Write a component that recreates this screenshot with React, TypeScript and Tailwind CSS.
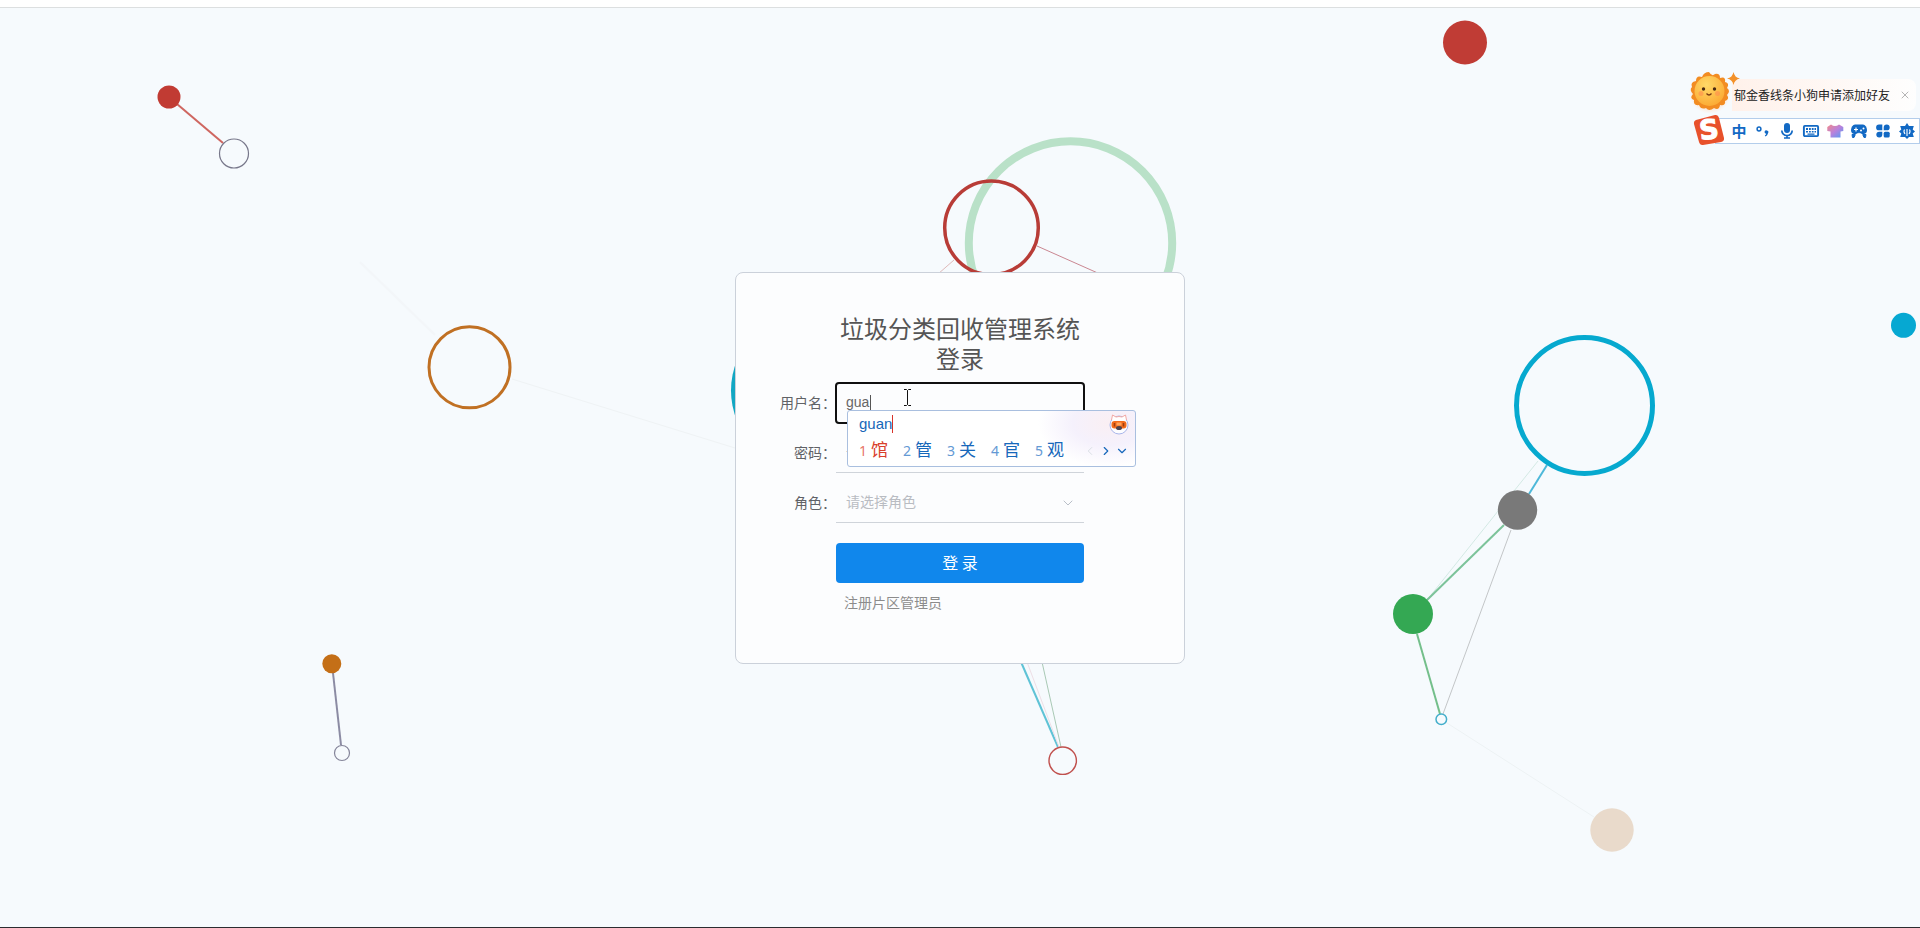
import React, { useState } from 'react';
import { ChevronDown, ChevronLeft, ChevronRight, X } from 'lucide-react';

interface Dot {
  x: number;
  y: number;
  r: number;
  color: string;
  ring?: number;
}

const LINKS = [
  { d: 'M177 104L223 143', color: '#cf6660', width: 2 },
  { d: 'M333 673L341 745', color: '#8b8ba3', width: 2 },
  { d: 'M360 262L435 335', color: '#f3f6f9', width: 2 },
  { d: 'M512 379L735 448', color: '#eff3f5', width: 1 },
  { d: 'M1037 246L1100 274', color: '#c98791', width: 1 },
  { d: 'M954 260L938 274', color: '#dfb9b9', width: 1 },
  { d: 'M1021 662L1058 747', color: '#5fc3d6', width: 2 },
  { d: 'M1027 662L1059 747', color: '#eedfe6', width: 1 },
  { d: 'M1042 662L1061 747', color: '#a9c9b5', width: 1 },
  { d: 'M1538 461L1427 600', color: '#d3e9e4', width: 1 },
  { d: 'M1547 465L1529 494', color: '#4db8d9', width: 2 },
  { d: 'M1504 525L1427 600', color: '#7cc39a', width: 2 },
  { d: 'M1511 530L1443 714', color: '#c3c6c8', width: 1 },
  { d: 'M1417 634L1440 714', color: '#74bf8b', width: 2 },
  { d: 'M1447 723L1594 817', color: '#edf2f4', width: 1 },
];

const DOTS: Dot[] = [
  { x: 169, y: 97, r: 11.5, color: '#c13b33' },
  { x: 234, y: 153.5, r: 14.5, color: '#77778a', ring: 1.2 },
  { x: 469.5, y: 367.3, r: 40.5, color: '#c07023', ring: 3 },
  { x: 331.8, y: 663.8, r: 9.5, color: '#c46f17' },
  { x: 342, y: 753, r: 7.5, color: '#85859a', ring: 1.2 },
  { x: 811, y: 390.5, r: 80, color: '#12a7c3' },
  { x: 1070.5, y: 243, r: 101.7, color: '#b9e1c8', ring: 8 },
  { x: 991.5, y: 227.8, r: 46.8, color: '#b83c37', ring: 3.5 },
  { x: 1465, y: 42.5, r: 22, color: '#c03c35' },
  { x: 1903.5, y: 325.3, r: 12.5, color: '#06a8d2' },
  { x: 1584.5, y: 405.5, r: 68, color: '#06a9cf', ring: 5 },
  { x: 1517.5, y: 510, r: 19.7, color: '#797979' },
  { x: 1413, y: 614, r: 20, color: '#34a853' },
  { x: 1441.3, y: 719.3, r: 5.3, color: '#43aecb', ring: 1.5 },
  { x: 1612, y: 830, r: 21.7, color: '#e9dacb' },
  { x: 1062.7, y: 760.7, r: 13.7, color: '#c0504d', ring: 1.4 },
];

const CANDIDATES = ['馆', '管', '关', '官', '观'];

const Particles: React.FC = () => (
  <svg
    className="pointer-events-none absolute inset-0 h-full w-full"
    viewBox="0 0 1920 928"
    preserveAspectRatio="xMidYMid slice"
    aria-hidden="true"
  >
    {LINKS.map(link => (
      <path key={link.d} d={link.d} stroke={link.color} strokeWidth={link.width} />
    ))}
    {DOTS.map(dot => (
      <circle
        key={`${dot.x}-${dot.y}`}
        cx={dot.x}
        cy={dot.y}
        r={dot.r}
        fill={dot.ring ? 'none' : dot.color}
        stroke={dot.ring ? dot.color : 'none'}
        strokeWidth={dot.ring ?? 0}
      />
    ))}
  </svg>
);

const Mascot: React.FC = () => (
  <svg width="20" height="22" viewBox="0 0 20 22" aria-hidden="true">
    <circle cx="10" cy="12" r="9" fill="#fdfdff" stroke="#a9b6ea" />
    <path d="M2.500 7L3.500 2L7 4Q10 3 13 4L16.500 2L17.500 7" fill="#fff" stroke="#f3a9a4" />
    <rect x="2.500" y="8" width="15" height="7.500" rx="3" fill="#f26a1b" />
    <path d="M5.500 10v3.500M14.500 10v3.500" stroke="#9c3d13" strokeWidth="1.500" />
    <rect x="7.500" y="9.500" width="5" height="3" fill="#ffa45c" />
    <ellipse cx="10" cy="15" rx="3" ry="2" fill="#4b4350" />
  </svg>
);

// Floating candidate window of the input method
const CandidateWindow: React.FC = () => (
  <div className="absolute top-[27px] left-[11px] z-10 h-[57px] w-[289px] rounded-[3px] border border-[#a9bfdf] bg-white bg-[radial-gradient(ellipse_70px_44px_at_260px_12px,#faeff3_0,#f5f1fc_50%,#ffffff_100%)] pl-[11px] font-['Liberation_Sans','Noto_Sans_CJK_SC',sans-serif]">
    <div className="flex h-[26px] items-center justify-between pr-[6px]">
      <span className="border-r border-[#d8332a] text-[15px] leading-[18px] text-[#1767b8]">guan</span>
      <Mascot />
    </div>
    <div className="flex h-[27px] items-center">
      {CANDIDATES.map((word, i) => (
        <button
          key={word}
          type="button"
          className={`flex w-[44px] items-center gap-1 text-[17px] leading-[24px] ${i === 0 ? 'text-[#d9402c]' : 'text-[#1768bb]'}`}
        >
          <span className={`font-['Noto_Sans',sans-serif] text-[14px] ${i === 0 ? 'text-[#e8766a]' : 'text-[#6499d4]'}`}>{i + 1}</span>
          {word}
        </button>
      ))}
      <div className="ml-auto flex items-center gap-[2px] pr-[6px] text-[#1768bb]">
        <button type="button" aria-label="上一页" className="text-[#d5dae0]"><ChevronLeft size={14} strokeWidth={1.5} /></button>
        <button type="button" aria-label="下一页"><ChevronRight size={14} /></button>
        <button type="button" aria-label="展开"><ChevronDown size={14} /></button>
      </div>
    </div>
  </div>
);

const TextCursor: React.FC = () => (
  <svg className="pointer-events-none absolute top-[6px] left-[67px]" width="9" height="17" viewBox="0 0 9 17" fill="none" stroke="#111" aria-hidden="true">
    <path d="M1 .5H3.5L4.5 1.5L5.5 .5H8M4.5 1.5V15.5M1 16.5H3.5L4.5 15.5L5.5 16.5H8" />
  </svg>
);

const LoginCard: React.FC = () => {
  const [username, setUsername] = useState('gua');
  const [password, setPassword] = useState('');
  const [role, setRole] = useState('');

  const row = 'col-span-3 grid grid-cols-subgrid items-center';
  const label = 'pb-[2px] text-right';
  const field = 'h-10 w-full bg-transparent px-[10px] pb-[2px] text-[14px] text-[#666] outline-none';

  return (
    <form
      className="relative grid w-[450px] grid-cols-[100px_1fr_100px] gap-y-[10px] rounded-lg border border-[#cbd1da] bg-[#fcfdfe] pt-10 pb-[52px] text-[14px] text-[#606266]"
      onSubmit={e => e.preventDefault()}
    >
      <h1 className="col-start-2 text-center text-[24px] leading-[30px] text-[#555]">垃圾分类回收管理系统登录</h1>

      <div className={row}>
        <label htmlFor="username" className={label}>用户名：</label>
        <div className="relative">
          <input
            id="username"
            className={`${field} rounded-[3px] font-['Liberation_Sans','Noto_Sans_CJK_SC',sans-serif] outline-2 -outline-offset-1 outline-[#101010] outline-solid`}
            value={username}
            onChange={e => setUsername(e.target.value)}
          />
          <span className="pointer-events-none absolute top-3 left-[34px] h-4 w-px bg-[#555]" />
          <TextCursor />
          <CandidateWindow />
        </div>
      </div>

      <div className={row}>
        <label htmlFor="password" className={label}>密码：</label>
        <input
          id="password"
          type="password"
          placeholder="请输入密码"
          className={`${field} border-b border-[#cfd4da] placeholder:text-[#bbb]`}
          value={password}
          onChange={e => setPassword(e.target.value)}
        />
      </div>

      <div className={row}>
        <label htmlFor="role" className={label}>角色：</label>
        <div className="relative">
          <select
            id="role"
            className={`${field} appearance-none border-b border-[#cfd4da] text-[#b9bcc2]`}
            value={role}
            onChange={e => setRole(e.target.value)}
          >
            <option value="">请选择角色</option>
            <option value="admin">管理员</option>
            <option value="area">片区管理员</option>
          </select>
          <ChevronDown size={16} strokeWidth={1.5} className="pointer-events-none absolute top-3 right-2 text-[#b9bfc8]" />
        </div>
      </div>

      <button type="submit" className="col-start-2 mt-[10px] h-10 rounded bg-[#1087ec] pb-[2px] text-[16px] text-white">登 录</button>
      <a href="#register" className="col-start-2 px-2 leading-[18px] text-[#8c8c8c]">注册片区管理员</a>
    </form>
  );
};

const Sun: React.FC = () => (
  <svg width="52" height="42" viewBox="0 0 52 42" aria-hidden="true">
    <defs>
      <radialGradient id="face" cx=".4" cy=".3" r=".8">
        <stop offset="0" stopColor="#ffd968" />
        <stop offset="1" stopColor="#fba62f" />
      </radialGradient>
      <radialGradient id="glow">
        <stop offset=".6" stopColor="#ffd2ae" />
        <stop offset="1" stopColor="#ffe9d8" stopOpacity="0" />
      </radialGradient>
    </defs>
    <circle cx="21" cy="22" r="21" fill="url(#glow)" />
    <path
      d="M20 1Q23 6 26 3Q31 2 31 7Q37 5 36 11Q41 12 38 17Q42 20 38 24Q41 28 36 30Q37 35 31 34Q30 40 25 37Q20 41 17 37Q12 39 10 34Q4 35 5 29Q0 27 4 23Q0 19 3 16Q1 11 7 10Q7 4 13 6Q15 1 20 1Z"
      fill="#f28c22"
    />
    <circle cx="20.500" cy="20" r="15" fill="url(#face)" />
    <circle cx="14.500" cy="18" r="1.700" fill="#4a2a12" />
    <circle cx="25.500" cy="18" r="1.700" fill="#4a2a12" />
    <circle cx="12" cy="22.500" r="2.500" fill="#ff8d4f" opacity=".6" />
    <circle cx="28.500" cy="22.500" r="2.500" fill="#ff8d4f" opacity=".6" />
    <path d="M17.500 22.500Q20 25.500 22.500 22.500" stroke="#7a3b12" strokeWidth="1.300" fill="none" />
    <path d="M44.500 1Q45.500 6.500 51 7.500Q45.500 8.500 44.500 14Q43.500 8.500 38 7.500Q43.500 6.500 44.500 1Z" fill="#f3912a" />
  </svg>
);

const SogouLogo: React.FC = () => (
  <svg width="32" height="32" viewBox="0 0 32 32" aria-hidden="true">
    <path d="M3 6L22 1Q25 .5 26 4L31 24Q31.500 27 28 28L10 31Q7 31.500 6 28L1 10Q.5 7 3 6Z" fill="#e8512b" />
    <text
      x="16"
      y="25"
      textAnchor="middle"
      transform="rotate(-6 16 16)"
      fill="#fff"
      stroke="#fff"
      strokeWidth="1"
      fontFamily="DejaVu Sans, sans-serif"
      fontWeight="bold"
      fontSize="27"
    >
      S
    </text>
  </svg>
);

const ICON = 'h-[18px] w-[18px] fill-current';

const InputMethodBar: React.FC = () => (
  <aside className="absolute top-[71px] right-0 w-[231px] font-['Noto_Sans_CJK_SC',sans-serif]">
    <div className="flex h-11 items-center pb-[2px]">
      <div className="relative z-10 -mr-[9px] h-[42px] w-[52px]"><Sun /></div>
      <div className="mt-[6px] mr-1 flex h-8 flex-1 items-center justify-between rounded-r-lg bg-linear-to-r from-[#fff1ea] to-[#fefefe] pr-[5px] pl-[2px] text-[12px] text-[#222]">
        <span className="whitespace-nowrap">郁金香线条小狗申请添加好友</span>
        <button type="button" aria-label="关闭" className="text-[#b5b5b5]"><X size={12} strokeWidth={2} /></button>
      </div>
    </div>
    <div className="flex h-8 items-center pl-1">
      <div className="relative z-10 pb-[2px]"><SogouLogo /></div>
      <div className="-ml-[10px] flex h-[26px] flex-1 items-center gap-[6px] border border-[#b3cdeb] bg-white pl-[14px] text-[#1269c4]">
        <button type="button" aria-label="中英文切换" className="w-[18px] shrink-0 text-center text-[15px] leading-[18px] font-bold">中</button>
        <button type="button" aria-label="标点" className="shrink-0">
          <svg viewBox="0 0 18 18" className={ICON}>
            <circle cx="5" cy="7" r="1.900" fill="none" stroke="currentColor" strokeWidth="1.500" />
            <path d="M10.500 10a1.900 1.900 0 1 1 3.500 1.200Q13.500 13.500 11.500 14.500L10.800 13.600Q12 12.800 12.200 11.800Q10.700 11.600 10.500 10Z" />
          </svg>
        </button>
        <button type="button" aria-label="语音" className="shrink-0">
          <svg viewBox="0 0 18 18" className={ICON}>
            <rect x="6" y="1" width="6" height="10" rx="3" />
            <path d="M3.800 8.500a5.200 5 0 0 0 10.400 0M9 13.500V16.500M6 16H12" fill="none" stroke="currentColor" strokeWidth="1.700" />
          </svg>
        </button>
        <button type="button" aria-label="软键盘" className="shrink-0">
          <svg viewBox="0 0 18 18" className={ICON}>
            <rect x="1.900" y="3.900" width="14.200" height="10.200" rx="1" fill="none" stroke="currentColor" strokeWidth="1.900" />
            <path d="M4 6h2v2H4zM7 6h1.800v2H7zM9.800 6h1.800v2H9.800zM12.500 6H14v2h-1.500zM4 9h2v1.500H4zM7 9h1.800v1.500H7zM9.800 9h1.800v1.500H9.800zM12.500 9H14v1.500h-1.500zM5.500 11.400h7v1.300h-7z" />
          </svg>
        </button>
        <button type="button" aria-label="皮肤" className="shrink-0">
          <svg viewBox="0 0 18 18" className="h-[18px] w-[18px]">
            <defs>
              <linearGradient id="skin" x1="0" y1="0" x2="1" y2="1">
                <stop offset="0" stopColor="#f28a8a" />
                <stop offset=".5" stopColor="#b981dc" />
                <stop offset="1" stopColor="#4f9df5" />
              </linearGradient>
            </defs>
            <path d="M5 2.500Q9 5.500 13 2.500L17.300 5V9L14.500 9.500V15.500H4.500V9.500L1.300 9V5Z" fill="url(#skin)" />
          </svg>
        </button>
        <button type="button" aria-label="游戏" className="shrink-0">
          <svg viewBox="0 0 18 18" className={ICON}>
            <path d="M5 2.500H13Q16.500 3 17 8Q17 11.500 14 12H4Q1 11.500 1 8Q1.500 3 5 2.500Z" />
            <path d="M2 12.500L5.500 12.500L4 15.500H2.500ZM16 12.500L12.500 12.500L14 15.500H15.500Z" stroke="currentColor" />
            <path d="M4 7.500H8M6 5.500V9.500" stroke="#fff" strokeWidth="1.200" />
            <circle cx="11" cy="8.500" r="1" fill="#fff" />
            <circle cx="13.500" cy="6.500" r="1" fill="#fff" />
            <path d="M5.500 13Q9 9.500 12.500 13" fill="none" stroke="#fff" />
          </svg>
        </button>
        <button type="button" aria-label="工具箱" className="shrink-0">
          <svg viewBox="0 0 18 18" className={ICON}>
            <path d="M5 2.500H8.300V8.300H5A2.900 2.900 0 0 1 5 2.500ZM9.700 5.400A3 2.900 0 1 1 12.700 8.300H9.700ZM8.300 9.700V12.600A3 2.900 0 1 1 5.300 9.700Z" />
            <rect x="9.700" y="9.700" width="6" height="5.800" rx="1.500" />
          </svg>
        </button>
        <button type="button" aria-label="设置" className="shrink-0">
          <svg viewBox="0 0 18 18" className={ICON}>
            <path d="M9 1L11 4L15.800 4L14.700 7.500L17 9.500L14.700 11.500L15.800 15L11 15L9 17L7 15L2.200 15L3.300 11.500L1 9.500L3.300 7.500L2.200 4L7 4Z" />
            <path d="M7 12Q5.200 9.500 6.500 7.500M11 12Q12.800 9.500 11.500 7.500M9 7V14" fill="none" stroke="#fff" strokeWidth="1.100" />
          </svg>
        </button>
      </div>
    </div>
  </aside>
);

export default function App() {
  return (
    <div className="relative flex min-h-screen flex-col overflow-hidden bg-[#f6fafd] font-['Noto_Sans_CJK_SC',sans-serif]">
      <div className="h-2 border-b border-[#dcdfe0] bg-white" />
      <Particles />
      <main className="flex flex-1 items-center justify-center pt-px">
        <LoginCard />
      </main>
      <InputMethodBar />
      <div className="h-px bg-[#2b2c30]" />
    </div>
  );
}
